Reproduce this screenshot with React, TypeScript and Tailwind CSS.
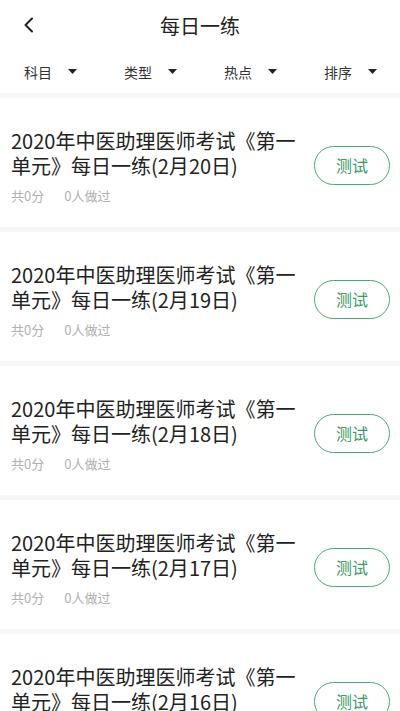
import React from "react";

const FONT = { fontFamily: '"Noto Sans CJK SC", "Noto Sans", sans-serif' };

const filters = ["科目", "类型", "热点", "排序"];
const dates = ["20", "19", "18", "17", "16"];

function Caret() {
  return (
    <svg width="9" height="5" viewBox="0 0 9 5" className="ml-auto mr-[23px]">
      <path d="M0 0 H9 L4.5 5 Z" fill="#222" />
    </svg>
  );
}

export default function App() {
  return (
    <div className="w-[400px] h-[711px] overflow-hidden bg-[#f7f7f7]" style={FONT}>
      <div className="bg-white">
        <div className="relative h-[50px] flex items-center justify-center">
          <svg
            width="12"
            height="16"
            viewBox="0 0 12 16"
            className="absolute left-[23px] top-[17px]"
          >
            <path d="M9 1.5 L2.5 8 L9 14.5" fill="none" stroke="#222" strokeWidth="2" strokeLinecap="round" strokeLinejoin="round" />
          </svg>
          <span className="text-[20px] text-[#222] leading-none mt-[2px]">每日一练</span>
        </div>
        <div className="grid grid-cols-4 h-[43px]">
          {filters.map((f) => (
            <div key={f} className="flex items-center pl-[24px]">
              <span className="text-[14px] text-[#333] leading-none">{f}</span>
              <Caret />
            </div>
          ))}
        </div>
      </div>
      <div className="flex flex-col gap-[5px] pt-[5px]">
        {dates.map((d) => (
          <div key={d} className="bg-white h-[129px] flex items-center pl-[11px] pr-[10px]">
            <div className="flex-1 flex flex-col pt-[8px]">
              <div className="text-[20px] leading-[25px] text-[#222] w-[290px]">
                2020年中医助理医师考试《第一单元》每日一练(2月{d}日)
              </div>
              <div className="flex gap-[20px] mt-[9px] text-[13px] leading-[18px] text-[#b0b0b0]">
                <span>共0分</span>
                <span>0人做过</span>
              </div>
            </div>
            <div className="w-[76px] h-[39px] shrink-0 rounded-full border-[1.5px] border-[#4aa877] flex items-center justify-center mt-[5px]">
              <span className="text-[16px] text-[#3a9a66] leading-none">测试</span>
            </div>
          </div>
        ))}
      </div>
    </div>
  );
}
